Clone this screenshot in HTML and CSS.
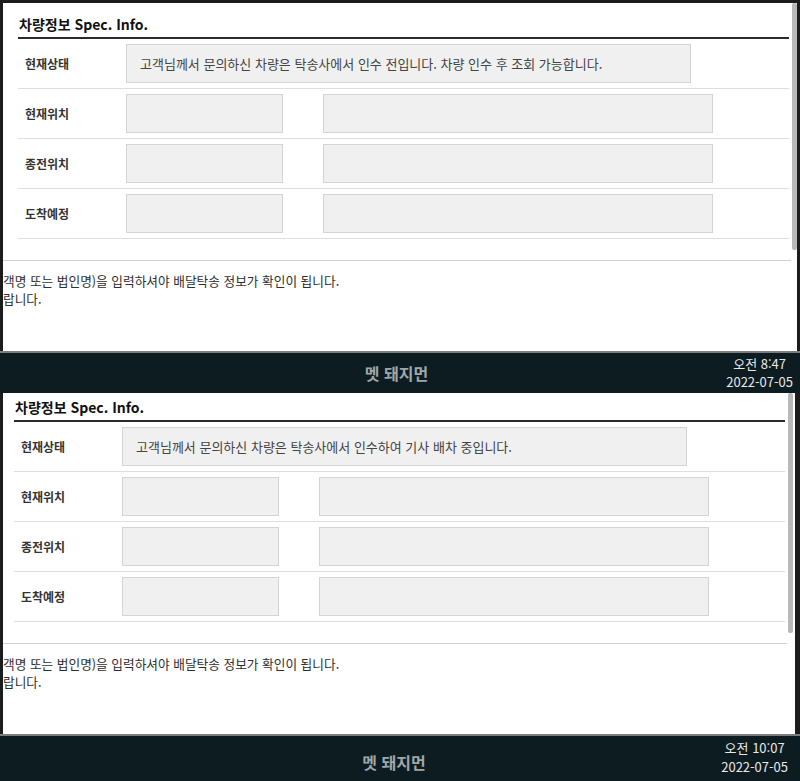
FILE: index.html
```html
<!DOCTYPE html>
<html lang="ko">
<head>
    <meta charset="UTF-8">
    <meta name="viewport" content="width=device-width, initial-scale=1.0">
    <title>차량정보 조회</title>
    <link rel="stylesheet" href="styles.css">
</head>
<body>
    <!-- 첫번째 캡처 (오전 8:47) -->
    <div class="capture capture-first">
        <div class="window">
            <div class="page">
                <div class="content">
                    <div class="spec">
                        <h2 class="spec-title">차량정보 Spec. Info.</h2>
                        <div class="spec-row">
                            <div class="spec-label">현재상태</div>
                            <div class="field field-status">고객님께서 문의하신 차량은 탁송사에서 인수 전입니다. 차량 인수 후 조회 가능합니다.</div>
                        </div>
                        <div class="spec-row">
                            <div class="spec-label">현재위치</div>
                            <div class="field field-short"></div>
                            <div class="field field-long"></div>
                        </div>
                        <div class="spec-row">
                            <div class="spec-label">종전위치</div>
                            <div class="field field-short"></div>
                            <div class="field field-long"></div>
                        </div>
                        <div class="spec-row">
                            <div class="spec-label">도착예정</div>
                            <div class="field field-short"></div>
                            <div class="field field-long"></div>
                        </div>
                    </div>
                    <div class="notice">
                        <p>객명 또는 법인명)을 입력하셔야 배달탁송 정보가 확인이 됩니다.</p>
                        <p>랍니다.</p>
                    </div>
                </div>
                <div class="scrollbar">
                    <div class="thumb"></div>
                </div>
            </div>
        </div>
        <div class="taskbar">
            <div class="taskbar-title">멧 돼지먼</div>
            <div class="clock">
                <div>오전 8:47</div>
                <div>2022-07-05</div>
            </div>
        </div>
    </div>

    <!-- 두번째 캡처 (오전 10:07) -->
    <div class="capture capture-second">
        <div class="window">
            <div class="page">
                <div class="content">
                    <div class="spec">
                        <h2 class="spec-title">차량정보 Spec. Info.</h2>
                        <div class="spec-row">
                            <div class="spec-label">현재상태</div>
                            <div class="field field-status">고객님께서 문의하신 차량은 탁송사에서 인수하여 기사 배차 중입니다.</div>
                        </div>
                        <div class="spec-row">
                            <div class="spec-label">현재위치</div>
                            <div class="field field-short"></div>
                            <div class="field field-long"></div>
                        </div>
                        <div class="spec-row">
                            <div class="spec-label">종전위치</div>
                            <div class="field field-short"></div>
                            <div class="field field-long"></div>
                        </div>
                        <div class="spec-row">
                            <div class="spec-label">도착예정</div>
                            <div class="field field-short"></div>
                            <div class="field field-long"></div>
                        </div>
                    </div>
                    <div class="notice">
                        <p>객명 또는 법인명)을 입력하셔야 배달탁송 정보가 확인이 됩니다.</p>
                        <p>랍니다.</p>
                    </div>
                </div>
                <div class="scrollbar">
                    <div class="thumb"></div>
                </div>
            </div>
        </div>
        <div class="taskbar">
            <div class="taskbar-title">멧 돼지먼</div>
            <div class="clock">
                <div>오전 10:07</div>
                <div>2022-07-05</div>
            </div>
        </div>
    </div>
</body>
</html>
```

FILE: styles.css
```css
body {
    margin: 0;
    height: 781px;
    overflow: hidden;
    background-color: #1c1c1c;
    font-family: "Noto Sans CJK KR", "Noto Sans", sans-serif;
    color: #333;
}

.capture {
    display: flex;
    flex-direction: column;
}

/* 창 테두리 */
.window {
    padding: 3px 3px 0 3px;
    background-color: #1c1c1c;
}

.capture-first .window {
    height: 348px;
}

.capture-second .window {
    height: 341px;
    padding: 0 5px 0 3px;
}

.page {
    display: flex;
    height: 100%;
    background-color: #fff;
}

.content {
    flex: 1;
    min-width: 0;
}

.scrollbar {
    width: 6px;
}

.capture-second .scrollbar {
    width: 8px;
}

.thumb {
    width: 5px;
    margin-left: 1px;
    background-color: #b9b9b9;
    border-radius: 2px;
}

.capture-first .thumb {
    height: 247px;
}

.capture-second .thumb {
    height: 240px;
}

/* 차량정보 */
.spec {
    margin: 0 2px 0 15px;
}

.capture-second .spec {
    margin-left: 11px;
}

.spec-title {
    margin: 0;
    padding: 11px 0 3px 1px;
    font-size: 14px;
    line-height: 20px;
    font-weight: bold;
    color: #111;
    border-bottom: 2px solid #2b2b2b;
}

.capture-second .spec-title {
    padding-top: 4px;
}

.spec-row {
    display: flex;
    align-items: center;
    height: 50px;
    box-sizing: border-box;
    border-bottom: 1px solid #dedede;
}

.spec-label {
    width: 108px;
    padding-left: 7px;
    box-sizing: border-box;
    font-size: 12px;
    font-weight: bold;
    color: #333;
}

.field {
    height: 39px;
    box-sizing: border-box;
    background-color: #f0f0f0;
    border: 1px solid #d4d4d4;
    padding: 0 13px;
    font-size: 13px;
    line-height: 37px;
    color: #444;
    white-space: nowrap;
}

.field-status {
    width: 565px;
}

.field-short {
    width: 157px;
}

.field-long {
    width: 390px;
    margin-left: 40px;
}

/* 안내 문구 */
.notice {
    margin-top: 21px;
    padding-top: 11px;
    border-top: 1px solid #d0d0d0;
    font-size: 12.7px;
    line-height: 18px;
    color: #2e2e2e;
}

.notice p {
    margin: 0;
    white-space: nowrap;
}

/* 작업표시줄 */
.taskbar {
    display: grid;
    grid-template-columns: 1fr auto 1fr;
    align-items: center;
    height: 40px;
    padding-right: 7px;
    background-color: #0d1c21;
    border-top: 2px solid #7d7d7d;
}

.capture-second .taskbar {
    height: 52px;
    padding-right: 12px;
}

.taskbar-title {
    grid-column: 2;
    font-size: 16px;
    font-weight: bold;
    color: #9ea7aa;
}

.clock {
    grid-column: 3;
    justify-self: end;
    align-self: start;
    padding-top: 2px;
    font-size: 13px;
    line-height: 18px;
    text-align: center;
    color: #e8e8e8;
}

.capture-second .clock {
    line-height: 19px;
}
```
